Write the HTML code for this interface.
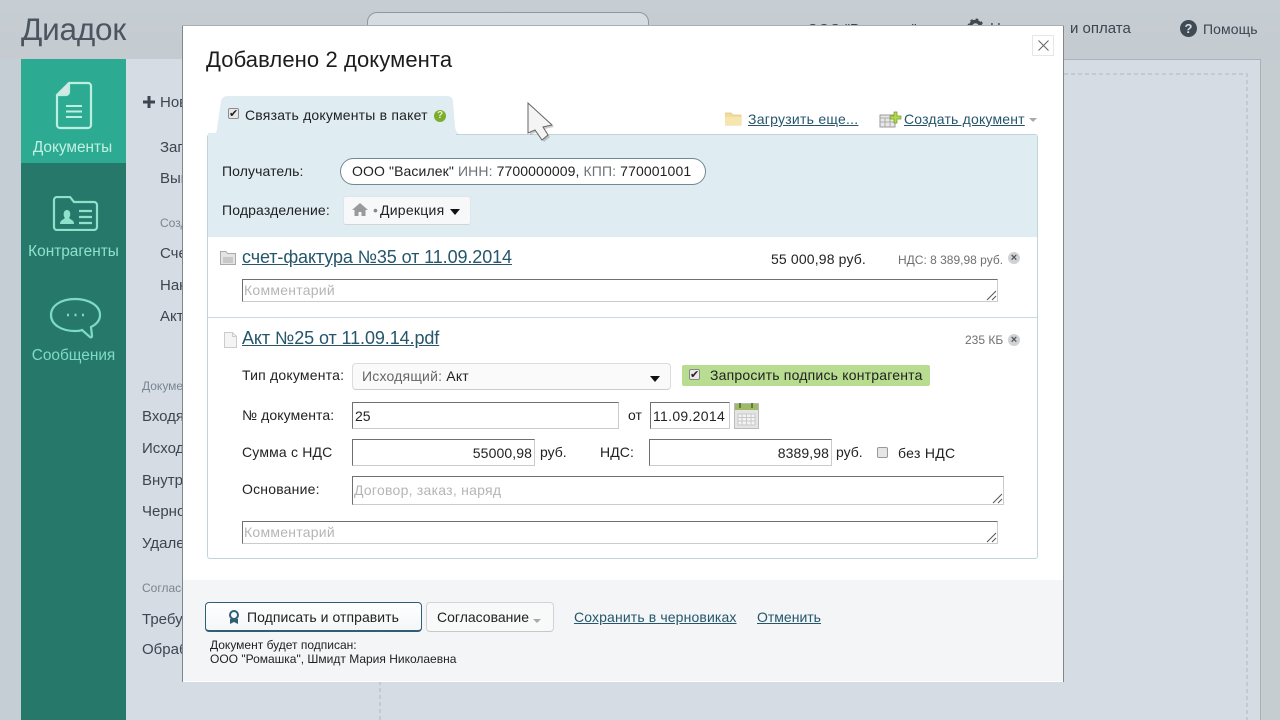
<!DOCTYPE html>
<html lang="ru"><head><meta charset="utf-8"><title>Диадок</title>
<style>
html,body{margin:0;padding:0;width:1280px;height:720px;overflow:hidden;background:#c5cdd3}
body{position:relative;font-family:"Liberation Sans",sans-serif;color:#222}
.a,.t{position:absolute}
.t{white-space:nowrap;line-height:20px;height:20px;font-size:14px}
.bg{color:#3c4650;font-size:15px}
.lk{color:#25566b;text-decoration:underline}
.in{position:absolute;box-sizing:border-box;background:#fff;border:1px solid #c8cccc;border-top-color:#6f6f6f;border-left-color:#6f6f6f;font-size:14px;line-height:24px;padding-left:2px;white-space:nowrap}
.ph{color:#b5b5b5;letter-spacing:.25px;padding-left:1px}
.sb{position:absolute;width:105px;left:21px;text-align:center;font-size:15.4px;line-height:20px}
.rz{position:absolute;right:0;bottom:0}
.x{position:absolute;width:12px;height:12px;border-radius:50%;background:#cfd3d5;color:#555;font-size:11px;line-height:12px;text-align:center;font-weight:bold}
</style></head><body>
<!-- background -->
<div class="a" style="left:0;top:0;width:1280px;height:59px;background:linear-gradient(#c6ced3,#c5cbd0)"></div>
<div class="t" style="left:21px;top:7px;height:44px;line-height:44px;font-size:31.5px;letter-spacing:-.2px;color:#4a5560">Диадок</div>
<div class="a" style="left:367px;top:12px;width:282px;height:30px;box-sizing:border-box;background:#d5dce2;border:1px solid #8f989d;border-radius:10px"></div>
<div class="t bg" style="left:807px;top:20px;font-size:14.5px">ООО "Ромашка"</div>
<div class="t bg" style="left:1070px;top:19px;font-size:15px">и оплата</div>
<div class="a" style="left:1180px;top:20px;width:17px;height:17px;border-radius:50%;background:#3f4a55;color:#d5dce2;font:bold 13px/17px 'Liberation Sans';text-align:center">?</div>
<div class="t bg" style="left:1203px;top:19px;font-size:14px;letter-spacing:.1px">Помощь</div>
<svg class="a" style="left:967px;top:18px" width="17" height="17" viewBox="0 0 17 17"><circle cx="8.5" cy="8.5" r="5" fill="none" stroke="#3f4a55" stroke-width="3.4"/><circle cx="8.5" cy="8.5" r="7" fill="none" stroke="#3f4a55" stroke-width="2" stroke-dasharray="2.5 3"/></svg>
<div class="t bg" style="left:990px;top:19px">Н</div>

<div class="a" style="left:126px;top:59px;width:1134px;height:661px;background:#d5dce3"></div>
<div class="a" style="left:347px;top:59px;width:913px;height:1px;background:#abb3b8"></div>
<div class="a" style="left:1260px;top:59px;width:1px;height:661px;background:#a9b1b6"></div>
<div class="a" style="left:1261px;top:59px;width:19px;height:661px;background:#c5cdd1"></div>
<svg class="a" style="left:379px;top:72px" width="870" height="648" viewBox="0 0 870 648" fill="none" stroke="#c3cad0" stroke-width="2" stroke-dasharray="4 3"><path d="M1 648V2H868V648"/></svg>
<div class="a" style="left:0;top:59px;width:21px;height:661px;background:#c5cdd5"></div>
<!-- sidebar -->
<div class="a" style="left:21px;top:59px;width:105px;height:661px;background:#26796a"></div>
<div class="a" style="left:21px;top:59px;width:105px;height:104px;background:#2cab92"></div>
<svg class="a" style="left:55px;top:81px" width="38" height="50" viewBox="0 0 38 50" fill="none" stroke="#bdeee0" stroke-width="2.2"><path d="M14 2H33a3 3 0 0 1 3 3V44a3 3 0 0 1-3 3H5a3 3 0 0 1-3-3V14Z"/><path d="M14 2V11a3 3 0 0 1-3 3H2" fill="#d9e5e6"/><path d="M11 25H27M11 30.500H27M11 36H27" stroke-width="2"/></svg>
<div class="sb" style="top:138px;left:20px;color:#c3f0e4">Документы</div>
<svg class="a" style="left:52px;top:196px" width="47" height="35" viewBox="0 0 47 35" fill="none" stroke="#8ee2cc" stroke-width="2.2"><path d="M2 31V4a3 3 0 0 1 3-3H18l4 5H42a3 3 0 0 1 3 3V31a3 3 0 0 1-3 3H5a3 3 0 0 1-3-3Z"/><path d="M8 28c0-4 3-4 5-6-2-2-2-8 2-8s4 6 2 8c2 2 5 2 5 6Z" fill="#8ee2cc" stroke="none"/><path d="M27 15H40M27 21H40M27 27H40"/></svg>
<div class="sb" style="top:242px;color:#8ee2cc">Контрагенты</div>
<svg class="a" style="left:49px;top:297px" width="53" height="43" viewBox="0 0 53 43" fill="none" stroke="#7ddbc5" stroke-width="2.200"><path d="M26 2C13 2 2 8 2 18s11 16 24 16c3 0 5 0 7-1l8 7c1 1 2 0 2-1l-1-9c6-3 9-7 9-12C51 8 39 2 26 2Z"/><path d="M18 18h2M25.500 18h2M33 18h2" stroke-width="2.400"/></svg>
<div class="sb" style="top:346px;color:#7ddbc5">Сообщения</div>
<!-- left menu -->
<svg class="a" style="left:143px;top:96px" width="12" height="12" viewBox="0 0 12 12"><path d="M4.500 0H7.500V4.500H12V7.500H7.500V12H4.500V7.500H0V4.500H4.500Z" fill="#3c4650"/></svg>
<div class="t bg" style="left:160px;top:93px;font-size:15px">Новый</div>
<div class="t bg" style="left:160px;top:138px">Загрузить</div>
<div class="t bg" style="left:160px;top:169px">Выгрузить</div>
<div class="t" style="left:160px;top:213px;font-size:12px;color:#7a8590">Создать</div>
<div class="t bg" style="left:160px;top:244px">Счет</div>
<div class="t bg" style="left:160px;top:276px">Накладная</div>
<div class="t bg" style="left:160px;top:307px">Акт</div>
<div class="t" style="left:142px;top:376px;font-size:12px;color:#7a8590">Документы</div>
<div class="t bg" style="left:142px;top:407px">Входящие</div>
<div class="t bg" style="left:142px;top:439px">Исходящие</div>
<div class="t bg" style="left:142px;top:471px">Внутренние</div>
<div class="t bg" style="left:142px;top:502px">Черновики</div>
<div class="t bg" style="left:142px;top:534px">Удаленные</div>
<div class="t" style="left:142px;top:578px;font-size:12px;color:#7a8590">Согласование</div>
<div class="t bg" style="left:142px;top:610px">Требуют</div>
<div class="t bg" style="left:142px;top:640px">Обработка</div>

<!-- dialog -->
<div class="a" style="left:182px;top:26px;width:882px;height:656px;background:#fff;border-right:1px solid #7f878c;border-left:1px solid #7f878c;box-sizing:border-box;box-shadow:0 -1px 0 #a8afb3"></div>
<div class="a" style="left:183px;top:580px;width:880px;height:101px;background:#f4f5f6"></div>
<div class="a" style="left:1032px;top:35px;width:22px;height:21px;box-sizing:border-box;border:1px solid #e6e6e6;background:#fff"><svg class="a" style="left:5px;top:4px" width="11" height="11" viewBox="0 0 11 11" stroke="#666" fill="none"><path d="M.5 .5L10.500 10.500M10.500 .5L.5 10.500"/></svg></div>
<div class="t" style="left:206px;top:47px;height:26px;line-height:26px;font-size:22px;letter-spacing:.1px;color:#1c1c1c">Добавлено 2 документа</div>

<!-- tab -->
<svg class="a" style="left:207px;top:95px" width="255" height="45" viewBox="0 0 255 45"><path d="M0 45V44C0 41 4 40 7 39 9 38 10 36 10 34L14 6C15 3 17 1 21 1H240c4 0 6 2 6 6L248 32C249 37 251 39 254 39.500V45Z" fill="#dfecf2"/></svg>
<div class="a" style="left:207px;top:134px;width:831px;height:425px;box-sizing:border-box;border:1px solid #bfd5d9;border-radius:3px;background:#fff"></div>
<div class="a" style="left:208px;top:135px;width:829px;height:102px;background:#dfecf2"></div>
<div class="a" style="left:208px;top:133px;width:248px;height:3px;background:#dfecf2"></div>
<div class="a" style="left:228px;top:108px;width:11px;height:11px;box-sizing:border-box;border:1px solid #8d8d8d;border-radius:2px;background:#e8e8e8;color:#222;font-size:11px;line-height:10px;text-align:center">✔</div>
<div class="t" style="left:245px;top:105px;letter-spacing:.2px">Связать документы в пакет</div>
<div class="a" style="left:434px;top:110px;width:12px;height:12px;border-radius:50%;background:#7cad2c;color:#e6f4c0;font:bold 10px/12px 'Liberation Sans';text-align:center">?</div>

<svg class="a" style="left:725px;top:111px" width="17" height="15" viewBox="0 0 17 15"><path d="M0 2H6L8 4H16V14H0Z" fill="#f0dc9c" stroke="#e0c985" stroke-width=".7"/><path d="M0 6H16V14H0Z" fill="#f6e6ae"/></svg>
<div class="t lk" style="left:748px;top:109px;letter-spacing:.25px">Загрузить еще...</div>
<svg class="a" style="left:879px;top:111px" width="23" height="17" viewBox="0 0 23 17"><rect x="1" y="4" width="15" height="12" fill="#e8e8e8" stroke="#999"/><path d="M1 7H16M6 7V16M11 7V16M1 11H16" stroke="#aaa"/><path d="M15 1H18V5H22V8H18V12H15V8H11V5H15Z" fill="#b4d94a" stroke="#6f9a20" stroke-width=".7"/></svg>
<div class="t lk" style="left:904px;top:109px;letter-spacing:.19px">Создать документ</div>
<div class="a" style="left:1029px;top:118px;border:4px solid transparent;border-top:4px solid #aaa;border-bottom:0"></div>

<div class="t" style="left:222px;top:161px;letter-spacing:.1px">Получатель:</div>
<div class="a" style="left:340px;top:158px;width:366px;height:27px;box-sizing:border-box;border:1px solid #6f8a90;border-radius:14px;background:#fff;padding-left:11px;font-size:14px;line-height:25px;letter-spacing:.11px;white-space:nowrap">ООО "Василек" <span style="color:#6b7378">ИНН:</span> 7700000009, <span style="color:#6b7378">КПП:</span> 770001001</div>
<div class="t" style="left:222px;top:200px;letter-spacing:.14px">Подразделение:</div>
<div class="a" style="left:343px;top:196px;width:128px;height:29px;box-sizing:border-box;border:1px solid #dfe5e8;border-bottom-color:#cfd5d8;border-radius:3px;background:#f7f8f9;font-size:14px;line-height:27px;white-space:nowrap"><span class="a" style="left:29px;top:0;color:#888">•</span><span class="a" style="left:36px;top:0;letter-spacing:.25px">Дирекция</span></div>
<svg class="a" style="left:352px;top:203px" width="16" height="13" viewBox="0 0 16 13"><path d="M8 0L16 7H13.500V13H9.500V9H6.500V13H2.500V7H0Z" fill="#9a9a9a"/></svg>
<div class="a" style="left:450px;top:209px;border:5px solid transparent;border-top:6px solid #111;border-bottom:0"></div>

<!-- doc 1 -->
<svg class="a" style="left:220px;top:251px" width="16" height="14" viewBox="0 0 16 14"><path d="M.5 .5H6L7.500 2.500H15.500V13.500H.5Z" fill="#e4e4e4" stroke="#aaa"/><path d="M3 6H13V12H3Z" fill="#c8c8c8"/></svg>
<div class="t lk" style="left:242px;top:246px;height:22px;line-height:22px;font-size:18px;letter-spacing:-.1px">счет-фактура №35 от 11.09.2014</div>
<div class="t" style="left:771px;top:249px;letter-spacing:.15px">55 000,98 руб.</div>
<div class="t" style="left:898px;top:250px;font-size:12px;color:#707070">НДС: 8 389,98 руб.</div>
<div class="x" style="left:1008px;top:252px">×</div>
<div class="in ph" style="left:242px;top:279px;width:756px;height:23px;line-height:21px">Комментарий<svg class="rz" width="11" height="11" viewBox="0 0 11 11" stroke="#555" fill="none"><path d="M1 10L10 1M6 10L10 6"/></svg></div>
<div class="a" style="left:208px;top:317px;width:829px;height:1px;background:#c9dade"></div>

<!-- doc 2 -->
<svg class="a" style="left:224px;top:332px" width="13" height="16" viewBox="0 0 13 16"><path d="M.5 .5H8.500L12.500 4.500V15.500H.5Z" fill="#f4f4f4" stroke="#ccc"/><path d="M8.500 .5V4.500H12.500" fill="none" stroke="#ccc"/></svg>
<div class="t lk" style="left:242px;top:327px;height:22px;line-height:22px;font-size:18px;letter-spacing:-.09px">Акт №25 от 11.09.14.pdf</div>
<div class="t" style="left:965px;top:330px;font-size:12px;color:#707070">235 КБ</div>
<div class="x" style="left:1008px;top:334px">×</div>

<div class="t" style="left:242px;top:365px;letter-spacing:.2px">Тип документа:</div>
<div class="a" style="left:352px;top:363px;width:319px;height:27px;box-sizing:border-box;border:1px solid #dcdcdc;border-bottom-color:#ccc;border-radius:4px;background:#fafafa;padding-left:9px;font-size:14px;line-height:25px;letter-spacing:.2px"><span style="color:#666">Исходящий:</span> Акт</div>
<div class="a" style="left:650px;top:376px;border:5px solid transparent;border-top:6px solid #111;border-bottom:0"></div>
<div class="a" style="left:682px;top:365px;width:248px;height:21px;background:#b8dc90;border-radius:2px"></div>
<div class="a" style="left:689px;top:369px;width:11px;height:11px;box-sizing:border-box;border:1px solid #888;border-radius:2px;background:#e8e8e8;color:#222;font-size:11px;line-height:10px;text-align:center">✔</div>
<div class="t" style="left:710px;top:365px;letter-spacing:.2px">Запросить подпись контрагента</div>

<div class="t" style="left:242px;top:405px;letter-spacing:.1px">№ документа:</div>
<div class="in" style="left:352px;top:402px;width:267px;height:27px;line-height:26px">25</div>
<div class="t" style="left:628px;top:405px">от</div>
<div class="in" style="left:650px;top:402px;width:80px;height:27px;line-height:26px;letter-spacing:.3px">11.09.2014</div>
<svg class="a" style="left:734px;top:403px" width="25" height="26" viewBox="0 0 25 26"><rect x=".5" y=".5" width="24" height="25" fill="#e4e4e4" stroke="#bbb"/><rect x="1" y="1" width="23" height="6" fill="#9fb86a"/><path d="M6 0v5M18 0v5" stroke="#5f7f30" stroke-width="2"/><path d="M4 11H21V22H4ZM4 14.500H21M4 18H21M8 11V22M12.500 11V22M17 11V22" fill="#f4f4f4" stroke="#c8c8c8"/></svg>

<div class="t" style="left:242px;top:442px;letter-spacing:.18px">Сумма с НДС</div>
<div class="in" style="left:352px;top:439px;width:183px;height:27px;text-align:right;padding-right:2px;line-height:27px;letter-spacing:.1px">55000,98</div>
<div class="t" style="left:540px;top:442px">руб.</div>
<div class="t" style="left:600px;top:442px;letter-spacing:.1px">НДС:</div>
<div class="in" style="left:649px;top:439px;width:183px;height:27px;text-align:right;padding-right:2px;line-height:27px;letter-spacing:.1px">8389,98</div>
<div class="t" style="left:836px;top:442px">руб.</div>
<div class="a" style="left:877px;top:447px;width:11px;height:11px;box-sizing:border-box;border:1px solid #999;border-radius:2px;background:#e6e6e6"></div>
<div class="t" style="left:898px;top:443px;letter-spacing:.3px">без НДС</div>

<div class="t" style="left:242px;top:479px;letter-spacing:.2px">Основание:</div>
<div class="in ph" style="left:352px;top:476px;width:652px;height:29px;line-height:27px">Договор, заказ, наряд<svg class="rz" width="11" height="11" viewBox="0 0 11 11" stroke="#555" fill="none"><path d="M1 10L10 1M6 10L10 6"/></svg></div>
<div class="in ph" style="left:242px;top:521px;width:756px;height:23px;line-height:21px">Комментарий<svg class="rz" width="11" height="11" viewBox="0 0 11 11" stroke="#555" fill="none"><path d="M1 10L10 1M6 10L10 6"/></svg></div>

<!-- footer -->
<div class="a" style="left:205px;top:602px;width:217px;height:30px;box-sizing:border-box;border:1px solid #2f5f75;border-bottom-width:2px;border-radius:4px;background:linear-gradient(#fff,#f4f6f7)"></div>
<svg class="a" style="left:228px;top:610px" width="12" height="14" viewBox="0 0 12 14"><circle cx="6" cy="5" r="4" fill="none" stroke="#2f5f75" stroke-width="2"/><path d="M2 9V14L6 12L10 14V9Z" fill="#2f5f75"/></svg>
<div class="t" style="left:247px;top:607px;letter-spacing:.05px">Подписать и отправить</div>
<div class="a" style="left:426px;top:602px;width:128px;height:30px;box-sizing:border-box;border:1px solid #d0d4d6;border-bottom-color:#c4c8ca;border-radius:4px;background:#f8f9f9"></div>
<div class="t" style="left:437px;top:607px">Согласование</div>
<div class="a" style="left:533px;top:619px;border:4px solid transparent;border-top:4px solid #aaa;border-bottom:0"></div>
<div class="t lk" style="left:574px;top:607px;letter-spacing:.13px">Сохранить в черновиках</div>
<div class="t lk" style="left:757px;top:607px">Отменить</div>
<div class="t" style="left:210px;top:635px;font-size:12px;line-height:20px">Документ будет подписан:</div>
<div class="t" style="left:210px;top:649px;font-size:12px;line-height:20px">ООО "Ромашка", Шмидт Мария Николаевна</div>

<!-- cursor -->
<svg class="a" style="left:525px;top:101px" width="34" height="44" viewBox="0 0 34 44"><path d="M3 2V32L10 29L17 39L23 34L18 26L27 24Z" fill="#888" opacity=".4" transform="translate(2 2)"/><path d="M3 2V32L10 29L17 39L23 34L18 26L27 24Z" fill="#f4f4f4" stroke="#666" stroke-width="1"/></svg>
</body></html>
